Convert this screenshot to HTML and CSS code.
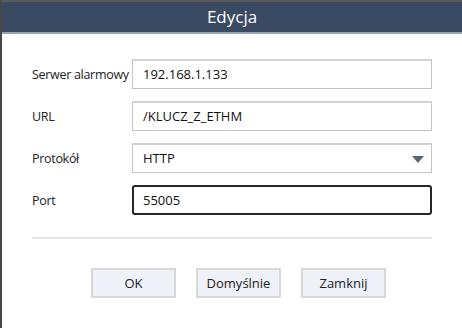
FILE: index.html
```html
<!DOCTYPE html>
<html lang="pl">
<head>
    <meta charset="UTF-8">
    <title>Edycja</title>
    <link rel="stylesheet" href="styles.css">
</head>
<body>
    <div class="dialog">
        <div class="title">Edycja</div>
        <div class="form">
            <div class="row">
                <label>Serwer alarmowy</label>
                <div class="field">192.168.1.133</div>
            </div>
            <div class="row">
                <label>URL</label>
                <div class="field">/KLUCZ_Z_ETHM</div>
            </div>
            <div class="row">
                <label>Protokół</label>
                <div class="field select">
                    HTTP
                    <span class="arrow"></span>
                </div>
            </div>
            <div class="row">
                <label>Port</label>
                <div class="field active">55005</div>
            </div>
            <div class="divider"></div>
            <div class="buttons">
                <button>OK</button>
                <button>Domyślnie</button>
                <button>Zamknij</button>
            </div>
        </div>
    </div>
</body>
</html>
```

FILE: styles.css
```css
body {
    margin: 0;
    width: 462px;
    height: 328px;
    overflow: hidden;
    background: #ffffff;
    font-family: "Open Sans", "Noto Sans", sans-serif;
}

.dialog {
    height: 328px;
    border-left: 2px solid #474747;
    border-top: 2px solid #5a5a5a;
    box-sizing: border-box;
}

.title {
    height: 30px;
    line-height: 30px;
    background: #3a4a63;
    border-bottom: 2px solid #9aa3b3;
    color: #ffffff;
    font-size: 17px;
    text-align: center;
}

.form {
    padding: 25px 0 0 30px;
}

.row {
    display: flex;
    align-items: center;
    height: 30px;
    margin-bottom: 12px;
}

.row label {
    flex: 0 0 100px;
    min-width: 0;
    font-size: 12.5px;
    letter-spacing: -0.3px;
    color: #222222;
    white-space: nowrap;
}

.field {
    position: relative;
    flex: 0 0 300px;
    height: 30px;
    box-sizing: border-box;
    border: 1px solid #c4c4c4;
    border-top: 2px solid #d2d2d2;
    padding-left: 10px;
    font-size: 13px;
    line-height: 27px;
    color: #111111;
}

.field.active {
    border: 2px solid #262626;
    border-radius: 3px;
    line-height: 26px;
    padding-left: 9px;
}

.arrow {
    position: absolute;
    right: 7px;
    top: 11px;
    width: 0;
    height: 0;
    border-left: 6px solid transparent;
    border-right: 6px solid transparent;
    border-top: 7px solid #5c6572;
}

.divider {
    width: 400px;
    height: 2px;
    background: #e2e2e2;
    margin-top: 22px;
}

.buttons {
    display: flex;
    gap: 20px;
    margin: 29px 0 0 59px;
}

.buttons button {
    width: 85px;
    height: 30px;
    background: #eef1f8;
    border: 2px solid #d8d8d8;
    font-family: inherit;
    font-size: 13px;
    color: #222222;
    padding: 0;
}
```
